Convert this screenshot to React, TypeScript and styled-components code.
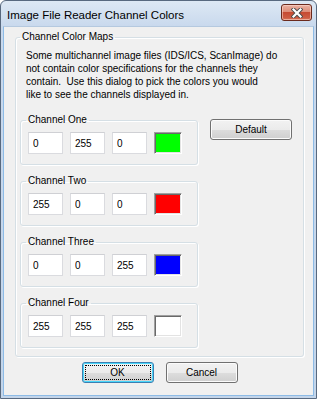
import React from "react";
import styled, { createGlobalStyle, css } from "styled-components";

const uiFont = `"Liberation Sans", Arial, sans-serif`;

const GlobalStyle = createGlobalStyle`
  html, body {
    margin: 0;
    padding: 0;
    background: #ffffff;
  }
  body {
    font-family: ${uiFont};
    font-size: 10px;
  }
`;

const Window = styled.div`
  width: 317px;
  height: 399px;
  box-sizing: border-box;
  display: flex;
  flex-direction: column;
  border: 1px solid #58697f;
  border-radius: 6px 6px 0 0;
  background: linear-gradient(to bottom, #dde8f4 0px, #c9d9ed 25px, #c3d5ea 100%);
  overflow: hidden;
`;

const TitleBar = styled.div`
  height: 25px;
  flex: none;
  display: flex;
  align-items: flex-start;
  justify-content: space-between;
  padding: 0 4px 0 6px;
`;

const Title = styled.div`
  font-family: ${uiFont};
  font-size: 11.5px;
  line-height: 15px;
  margin-top: 7px;
  color: #000;
`;

const CloseButton = styled.div`
  width: 31px;
  height: 17px;
  margin-top: 3px;
  box-sizing: border-box;
  border: 1px solid #6b2a1d;
  border-radius: 3px;
  background: linear-gradient(
    to bottom,
    #eab2a3 0%,
    #dd8d78 45%,
    #c64b33 50%,
    #cd5c43 85%,
    #d9795f 100%
  );
  box-shadow: inset 0 0 0 1px rgba(255, 220, 210, 0.55);
  display: flex;
  align-items: center;
  justify-content: center;
`;

const Client = styled.div`
  flex: 1;
  margin: 0 2px 2px 2px;
  box-sizing: border-box;
  border: 1px solid #8dbbe6;
  border-top-color: #b5c9df;
  background: #f0f0f0;
  padding: 3px 9px 0 11px;
  display: flex;
  flex-direction: column;
`;

const GroupBox = styled.fieldset<{ $spaced?: boolean }>`
  margin: ${(p) => (p.$spaced ? "9px 0 0 0" : "0")};
  padding: 0;
  min-width: 0;
  border: 1px solid #d5dfe5;
  border-radius: 3px;
  box-shadow: inset 1px 1px 0 #ffffff, 1px 1px 0 #ffffff;
`;

const Legend = styled.legend<{ $inset: number }>`
  font-family: ${uiFont};
  font-size: 10px;
  line-height: 14px;
  padding: 0 2px;
  margin-left: ${(p) => p.$inset}px;
  color: #000;
`;

const Description = styled.p`
  margin: 5px 0 0 10px;
  font-family: ${uiFont};
  font-size: 10px;
  line-height: 13px;
  color: #000;
`;

const MainRow = styled.div`
  display: flex;
  align-items: flex-start;
  gap: 12px;
  margin: 12px 0 8px 4px;
`;

const ChannelColumn = styled.div`
  width: 178px;
  display: flex;
  flex-direction: column;
`;

const ChannelBody = styled.div`
  display: flex;
  gap: 7px;
  padding: 5px 0 10px 7px;
`;

const NumberField = styled.input`
  width: 35px;
  height: 22px;
  box-sizing: border-box;
  border: 1px solid #dadbdf;
  border-top-color: #cfd0d4;
  background: #ffffff;
  padding: 0 0 0 4px;
  margin: 0;
  font-family: ${uiFont};
  font-size: 10px;
  color: #000;
  outline: none;
`;

const Swatch = styled.div<{ $color: string }>`
  width: 28px;
  height: 22px;
  box-sizing: border-box;
  background: ${(p) => p.$color};
  border-top: 1px solid #a0a0a0;
  border-left: 1px solid #a0a0a0;
  border-right: 1px solid #ffffff;
  border-bottom: 1px solid #ffffff;
  box-shadow: inset 1px 1px 0 #696969, inset -1px -1px 0 #e3e3e3;
`;

const Button = styled.button<{ $width: number; $isDefault?: boolean }>`
  position: relative;
  width: ${(p) => p.$width}px;
  height: 21px;
  box-sizing: border-box;
  margin: 0;
  padding: 0;
  border: 1px solid #707070;
  border-radius: 3px;
  background: linear-gradient(
    to bottom,
    #f2f2f2 0%,
    #ebebeb 50%,
    #dddddd 51%,
    #cfcfcf 100%
  );
  box-shadow: inset 0 0 0 1px #fbfbfb;
  font-family: ${uiFont};
  font-size: 10px;
  color: #000;
  ${(p) =>
    p.$isDefault &&
    css`
      border-color: #3c7fb1;
      box-shadow: inset 0 0 0 1px #48d7fb;
      &::after {
        content: "";
        position: absolute;
        inset: 2px;
        border: 1px dotted #000;
      }
    `}
`;

const DefaultButton = styled(Button)`
  margin-top: 6px;
`;

const ButtonRow = styled.div`
  display: flex;
  justify-content: center;
  gap: 12px;
  margin-top: 5px;
`;

const channels = [
  { name: "Channel One", rgb: [0, 255, 0] },
  { name: "Channel Two", rgb: [255, 0, 0] },
  { name: "Channel Three", rgb: [0, 0, 255] },
  { name: "Channel Four", rgb: [255, 255, 255] },
];

function CloseGlyph() {
  return (
    <svg width="12" height="10" viewBox="0 0 12 10">
      <path
        d="M2.5 1.5 L9.5 8.5 M9.5 1.5 L2.5 8.5"
        stroke="#4a4a4a"
        strokeWidth="4"
        strokeLinecap="square"
      />
      <path
        d="M2.5 1.5 L9.5 8.5 M9.5 1.5 L2.5 8.5"
        stroke="#ffffff"
        strokeWidth="2.2"
        strokeLinecap="square"
      />
    </svg>
  );
}

export default function App() {
  return (
    <>
      <GlobalStyle />
      <Window>
        <TitleBar>
          <Title>Image File Reader Channel Colors</Title>
          <CloseButton>
            <CloseGlyph />
          </CloseButton>
        </TitleBar>
        <Client>
          <GroupBox>
            <Legend $inset={4}>Channel Color Maps</Legend>
            <Description>
              Some multichannel image files (IDS/ICS, ScanImage) do
              <br />
              not contain color specifications for the channels they
              <br />
              contain.&nbsp; Use this dialog to pick the colors you would
              <br />
              like to see the channels displayed in.
            </Description>
            <MainRow>
              <ChannelColumn>
                {channels.map((ch, i) => (
                  <GroupBox key={ch.name} $spaced={i > 0}>
                    <Legend $inset={5}>{ch.name}</Legend>
                    <ChannelBody>
                      {ch.rgb.map((v, j) => (
                        <NumberField key={j} value={v} readOnly />
                      ))}
                      <Swatch $color={`rgb(${ch.rgb.join(",")})`} />
                    </ChannelBody>
                  </GroupBox>
                ))}
              </ChannelColumn>
              <DefaultButton $width={82}>Default</DefaultButton>
            </MainRow>
          </GroupBox>
          <ButtonRow>
            <Button $width={72} $isDefault>
              OK
            </Button>
            <Button $width={72}>Cancel</Button>
          </ButtonRow>
        </Client>
      </Window>
    </>
  );
}
